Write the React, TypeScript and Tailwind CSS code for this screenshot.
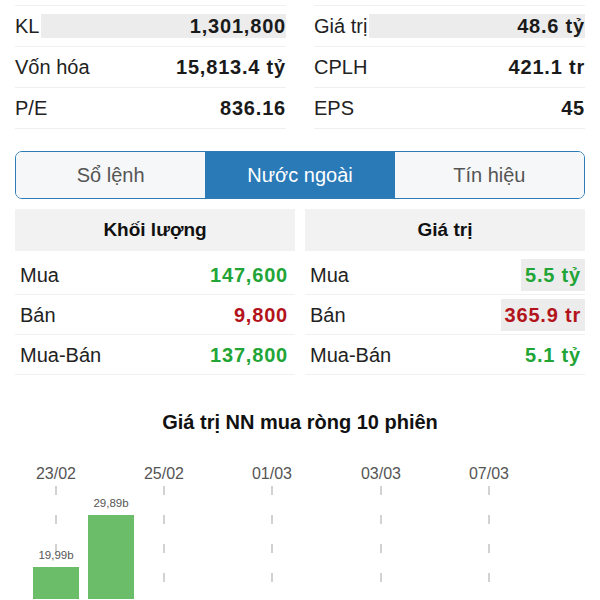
import React from 'react'

const font = { fontFamily: '"Liberation Sans", Arial, sans-serif' }

const stats = [
    [
        { label: 'KL', value: '1,301,800', hl: true },
        { label: 'Vốn hóa', value: '15,813.4 tỷ' },
        { label: 'P/E', value: '836.16' },
    ],
    [
        { label: 'Giá trị', value: '48.6 tỷ', hl: true },
        { label: 'CPLH', value: '421.1 tr' },
        { label: 'EPS', value: '45' },
    ],
]

const GREEN = 'text-[#22a536]'
const RED = 'text-[#b3141c]'

const volRows = [
    { label: 'Mua', value: '147,600', color: GREEN },
    { label: 'Bán', value: '9,800', color: RED },
    { label: 'Mua-Bán', value: '137,800', color: GREEN },
]

const valRows = [
    { label: 'Mua', value: '5.5 tỷ', color: GREEN, hl: true },
    { label: 'Bán', value: '365.9 tr', color: RED, hl: true },
    { label: 'Mua-Bán', value: '5.1 tỷ', color: GREEN },
]

const dates = ['23/02', '25/02', '01/03', '03/03', '07/03']

function StatColumn({ rows }: { rows: { label: string; value: string; hl?: boolean }[] }) {
    return (
        <div className='border-t border-[#f0f0f0]'>
            {rows.map(r => (
                <div key={r.label} className='flex items-center h-[41px] border-b border-[#f0f0f0]'>
                    <span className='text-[20px] text-[#222]'>{r.label}</span>
                    <span className={`flex-1 ml-[2px] h-[24px] flex items-center justify-end text-[20px] font-bold tracking-[0.8px] text-[#1a1a1a] ${r.hl ? 'bg-[#ececec]' : ''}`}>
                        {r.value}
                    </span>
                </div>
            ))}
        </div>
    )
}

function FlowTable({ title, rows, inset }: { title: string; rows: { label: string; value: string; color: string; hl?: boolean }[]; inset: string }) {
    return (
        <div>
            <div className='h-[42px] bg-[#f2f2f2] flex items-center justify-center text-[19px] font-bold text-[#111]'>
                {title}
            </div>
            <div className='pt-[4px]'>
                {rows.map(r => (
                    <div key={r.label} className={`flex items-center justify-between h-[40px] border-b border-[#f0f0f0] ${inset}`}>
                        <span className='text-[20px] text-[#222]'>{r.label}</span>
                        <span className={`text-[20px] font-bold tracking-[0.8px] px-[4px] h-[32px] flex items-center ${r.color} ${r.hl ? 'bg-[#ececec]' : ''}`}>
                            {r.value}
                        </span>
                    </div>
                ))}
            </div>
        </div>
    )
}

function NetChart() {
    const xs = [56, 164, 272, 381, 489]
    return (
        <svg width={600} height={145} className='block'>
            {dates.map((d, i) => (
                <g key={d}>
                    <text x={xs[i]} y={25} textAnchor='middle' fontSize={16} fill='#555' style={font}>{d}</text>
                    <line x1={xs[i]} y1={32} x2={xs[i]} y2={145} stroke='#c4c4c4' strokeWidth={1.5} strokeDasharray='9 20' />
                </g>
            ))}
            <rect x={33} y={113} width={46} height={40} fill='#6cbd6a' />
            <rect x={88} y={61} width={46} height={90} fill='#6cbd6a' />
            <text x={56} y={105} textAnchor='middle' fontSize={11.5} fill='#555' style={font}>19,99b</text>
            <text x={111} y={53} textAnchor='middle' fontSize={11.5} fill='#555' style={font}>29,89b</text>
        </svg>
    )
}

export default function App() {
    return (
        <div className='w-[600px] h-[600px] overflow-hidden bg-white' style={font}>
            <div className='pt-[5px] px-[15px] grid grid-cols-2 gap-x-[28px]'>
                {stats.map((col, i) => <StatColumn key={i} rows={col} />)}
            </div>

            <div className='mx-[15px] mt-[22px] h-[48px] flex border-[1.5px] border-[#2f7bb6] rounded-[7px] overflow-hidden'>
                <div className='flex-1 bg-[#f6f7f9] flex items-center justify-center text-[20px] text-[#555]'>Sổ lệnh</div>
                <div className='flex-1 bg-[#2a7ab8] flex items-center justify-center text-[20px] text-white'>Nước ngoài</div>
                <div className='flex-1 bg-[#f6f7f9] flex items-center justify-center text-[20px] text-[#555]'>Tín hiệu</div>
            </div>

            <div className='mx-[15px] mt-[10px] grid grid-cols-2 gap-x-[10px]'>
                <FlowTable title='Khối lượng' rows={volRows} inset='pl-[5px] pr-[3px]' />
                <FlowTable title='Giá trị' rows={valRows} inset='pl-[5px] pr-0' />
            </div>

            <div className='mt-[32px] text-center text-[20px] font-bold text-[#111]'>
                Giá trị NN mua ròng 10 phiên
            </div>
            <div className='mt-[17px]'>
                <NetChart />
            </div>
        </div>
    )
}
